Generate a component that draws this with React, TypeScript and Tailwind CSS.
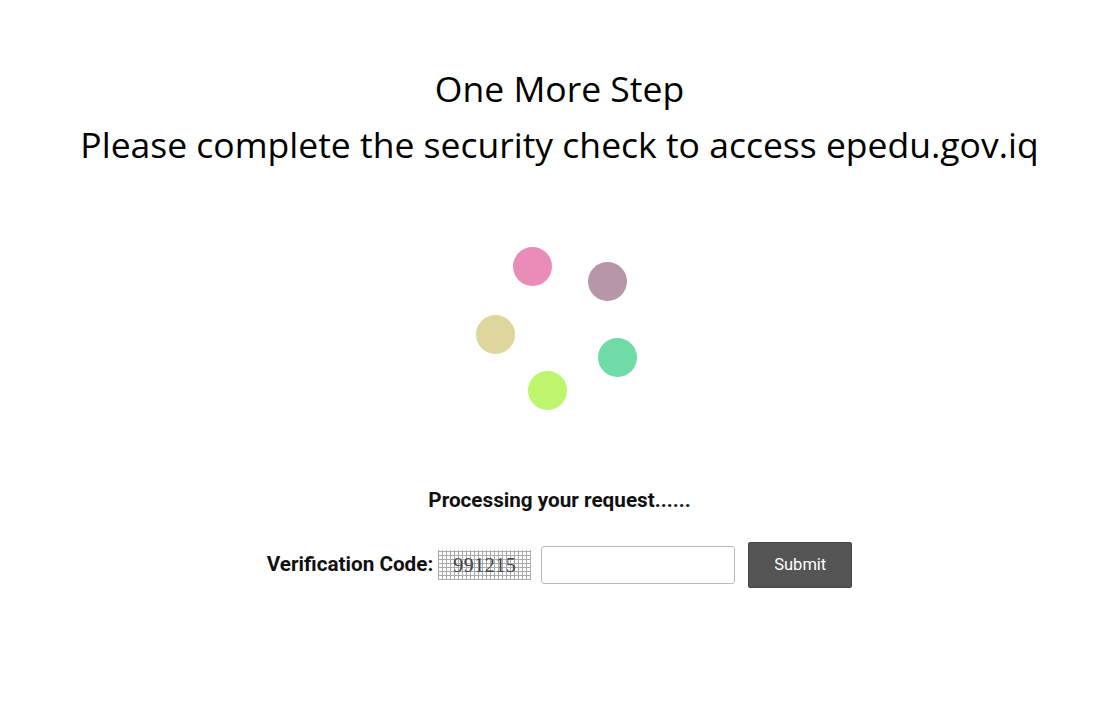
import React from "react";

const dots = [
  { x: 532, y: 266, c: "#ea8bb8" },
  { x: 607, y: 281, c: "#b896aa" },
  { x: 495, y: 334, c: "#dfd69e" },
  { x: 617, y: 357, c: "#6fdca8" },
  { x: 547, y: 390, c: "#bdf56c" },
];

export default function App() {
  return (
    <div className="w-[1107px] h-[709px] bg-white flex flex-col items-center overflow-hidden pl-[12px]">
      <div className="mt-[60px] flex flex-col items-center text-black font-['Segoe_UI','Open_Sans',sans-serif] text-[35.5px] leading-[56px]">
        <div>One More Step</div>
        <div>Please complete the security check to access epedu.gov.iq</div>
      </div>
      <div className="relative w-[1107px] h-[300px] mt-[17px] -ml-[12px]">
        {dots.map((d, i) => (
          <div
            key={i}
            className="absolute w-[39px] h-[39px] rounded-full"
            style={{ left: d.x - 19.5, top: d.y - 19.5 - 189, backgroundColor: d.c }}
          />
        ))}
      </div>
      <div className="-mt-[1px] font-['Roboto',sans-serif] font-bold text-[20.7px] text-[#111] leading-[24px]">
        Processing your request......
      </div>
      <div className="mt-[30px] flex items-center font-['Roboto',sans-serif]">
        <span className="font-bold text-[20.7px] text-[#111]">Verification Code:</span>
        <span className="ml-[5px] w-[93px] h-[30px] flex items-center justify-center font-['Liberation_Serif',serif] text-[20px] text-[#444] tracking-[0.5px] bg-[repeating-linear-gradient(0deg,#aaa_0px,#aaa_1px,transparent_1px,transparent_4px),repeating-linear-gradient(90deg,#aaa_0px,#aaa_1px,transparent_1px,transparent_4px)]">
          991215
        </span>
        <input className="ml-[10px] w-[194px] h-[38px] border border-[#bbb] rounded-[3px] bg-white outline-none" />
        <button className="ml-[13px] w-[104px] h-[46px] bg-[#555555] text-white text-[16.5px] rounded-[2px] border border-[#444]">
          Submit
        </button>
      </div>
    </div>
  );
}
